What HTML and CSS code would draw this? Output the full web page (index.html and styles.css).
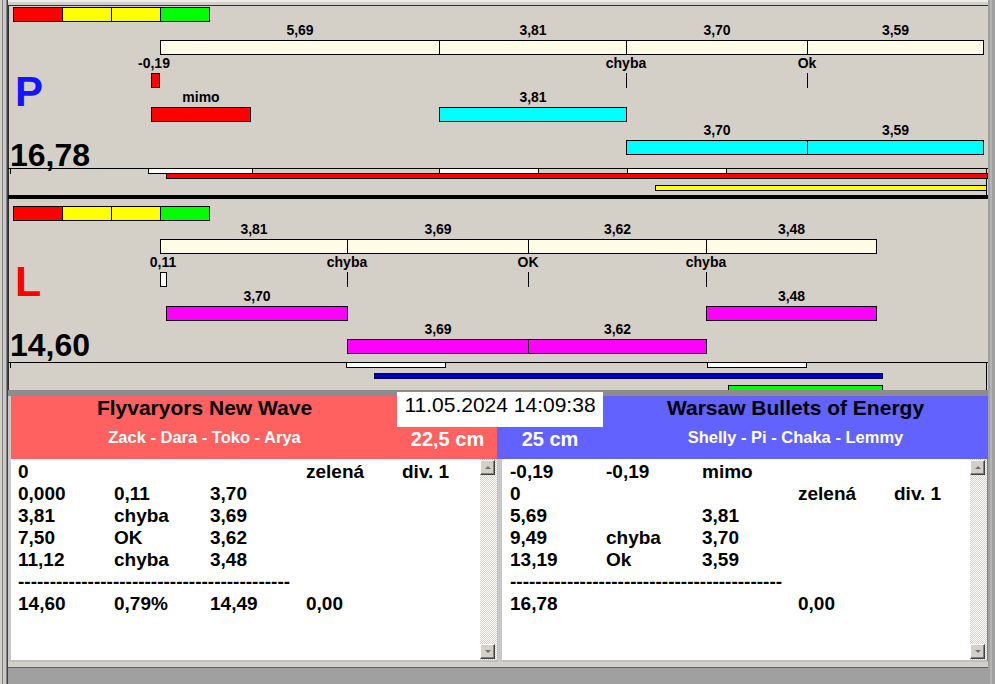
FILE: index.html
```html
<!DOCTYPE html>
<html>
<head>
<meta charset="utf-8">
<link rel="stylesheet" href="styles.css">
</head>
<body>
<div class="app">
  <div class="lstrip"></div>
  <div class="col">
    <div class="topstrip"></div>

    <div class="chart p">
      <div class="legend"><span class="red"></span><span class="yellow"></span><span class="yellow"></span><span class="green"></span></div>

      <div class="seg cream r1" style="left:152px;width:280px"><span class="lbl">5,69</span></div>
      <div class="seg cream r1" style="left:431px;width:188px"><span class="lbl">3,81</span></div>
      <div class="seg cream r1" style="left:618px;width:182px"><span class="lbl">3,70</span></div>
      <div class="seg cream r1" style="left:799px;width:177px"><span class="lbl">3,59</span></div>

      <span class="sub" style="left:146px">-0,19</span>
      <span class="sub" style="left:618px">chyba</span>
      <span class="sub" style="left:799px">Ok</span>
      <div class="tick" style="left:618px"></div>
      <div class="tick" style="left:799px"></div>
      <div class="mark red" style="left:143px;width:9px"></div>

      <div class="seg red r2" style="left:143px;width:100px"><span class="lbl">mimo</span></div>
      <div class="seg cyan r2" style="left:431px;width:188px"><span class="lbl">3,81</span></div>
      <div class="seg cyan r3" style="left:618px;width:182px"><span class="lbl">3,70</span></div>
      <div class="seg cyan r3" style="left:799px;width:177px"><span class="lbl">3,59</span></div>

      <div class="letter">P</div>
      <div class="total">16,78</div>

      <div class="base"></div>
      <div class="tk0"></div>
      <div class="vend"></div>
      <div class="ln red" style="left:158px;width:822px"></div>
      <div class="wseg" style="left:140px;width:105px"></div>
      <div class="wseg" style="left:431px;width:100px"></div>
      <div class="wseg" style="left:619px;width:100px"></div>
      <div class="ln yellow" style="left:647px;width:332px"></div>
    </div>

    <div class="sep"></div>

    <div class="chart l">
      <div class="legend"><span class="red"></span><span class="yellow"></span><span class="yellow"></span><span class="green"></span></div>

      <div class="seg cream r1" style="left:152px;width:188px"><span class="lbl">3,81</span></div>
      <div class="seg cream r1" style="left:339px;width:182px"><span class="lbl">3,69</span></div>
      <div class="seg cream r1" style="left:520px;width:179px"><span class="lbl">3,62</span></div>
      <div class="seg cream r1" style="left:698px;width:171px"><span class="lbl">3,48</span></div>

      <span class="sub" style="left:155px">0,11</span>
      <span class="sub" style="left:339px">chyba</span>
      <span class="sub" style="left:520px">OK</span>
      <span class="sub" style="left:698px">chyba</span>
      <div class="tick" style="left:339px"></div>
      <div class="tick" style="left:520px"></div>
      <div class="tick" style="left:698px"></div>
      <div class="mark white" style="left:152px;width:7px"></div>

      <div class="seg mag r2" style="left:158px;width:182px"><span class="lbl">3,70</span></div>
      <div class="seg mag r2" style="left:698px;width:171px"><span class="lbl">3,48</span></div>
      <div class="seg mag r3" style="left:339px;width:182px"><span class="lbl">3,69</span></div>
      <div class="seg mag r3" style="left:520px;width:179px"><span class="lbl">3,62</span></div>

      <div class="letter">L</div>
      <div class="total">14,60</div>

      <div class="base"></div>
      <div class="tk0"></div>
      <div class="vend"></div>
      <div class="wseg" style="left:338px;width:100px"></div>
      <div class="wseg" style="left:699px;width:100px"></div>
      <div class="ln blue" style="left:366px;width:509px"></div>
      <div class="ln green" style="left:720px;width:155px"></div>
    </div>

    <div class="band"></div>

    <div class="bottom">
      <div class="team team-a">
        <div class="names">
          <div class="title">Flyvaryors New Wave</div>
          <div class="members">Zack - Dara - Toko - Arya</div>
        </div>
        <div class="cm">22,5 cm</div>
      </div>
      <div class="team team-b">
        <div class="cm">25 cm</div>
        <div class="names">
          <div class="title">Warsaw Bullets of Energy</div>
          <div class="members">Shelly - Pi - Chaka - Lemmy</div>
        </div>
      </div>

      <div class="list list-a">
        <div class="body">
          <div class="rows">
            <span>0</span><span></span><span></span><span>zelená</span><span>div. 1</span>
            <span>0,000</span><span>0,11</span><span>3,70</span><span></span><span></span>
            <span>3,81</span><span>chyba</span><span>3,69</span><span></span><span></span>
            <span>7,50</span><span>OK</span><span>3,62</span><span></span><span></span>
            <span>11,12</span><span>chyba</span><span>3,48</span><span></span><span></span>
            <span class="dash">-------------------------------------------</span>
            <span>14,60</span><span>0,79%</span><span>14,49</span><span>0,00</span><span></span>
          </div>
        </div>
        <div class="sb">
          <div class="sbtn up"><i></i></div>
          <div class="track"></div>
          <div class="sbtn down"><i></i></div>
        </div>
      </div>

      <div class="list list-b">
        <div class="body">
          <div class="rows">
            <span>-0,19</span><span>-0,19</span><span>mimo</span><span></span><span></span>
            <span>0</span><span></span><span></span><span>zelená</span><span>div. 1</span>
            <span>5,69</span><span></span><span>3,81</span><span></span><span></span>
            <span>9,49</span><span>chyba</span><span>3,70</span><span></span><span></span>
            <span>13,19</span><span>Ok</span><span>3,59</span><span></span><span></span>
            <span class="dash">-------------------------------------------</span>
            <span>16,78</span><span></span><span></span><span>0,00</span><span></span>
          </div>
        </div>
        <div class="sb">
          <div class="sbtn up"><i></i></div>
          <div class="track"></div>
          <div class="sbtn down"><i></i></div>
        </div>
      </div>

      <div class="date">11.05.2024 14:09:38</div>
    </div>

    <div class="bstrip"></div>
  </div>
  <div class="rstrip"></div>
</div>
</body>
</html>
```

FILE: styles.css
```css
* { box-sizing: border-box; margin: 0; padding: 0; }
body { margin: 0; background: #a0a0a0; font-family: "Liberation Sans", Arial, sans-serif; color: #000; }

.app { display: flex; width: 995px; height: 684px; overflow: hidden; background: #a0a0a0; }
.lstrip { width: 8px; flex: none; background: linear-gradient(to right, #d4d0c8 0 2px, #808080 2px 3px, #c8c8c8 3px 6px, #808080 6px 7px, #404040 7px 8px); }
.col { width: 980px; flex: none; display: flex; flex-direction: column; }
.rstrip { flex: 1; background: linear-gradient(to right, #a0a0a0 0 2px, #b4b4b4 2px 4px, #a0a0a0 4px); }

.topstrip { height: 5px; flex: none; background: #d4d0c8; border-top: 2px solid #ececec; }

.chart { position: relative; flex: none; background: #d4d0c8; overflow: hidden; }
.chart.p { height: 190px; box-shadow: inset 1px 1px 0 #303030; }
.chart.l { height: 191px; box-shadow: inset 1px 0 0 #303030; }
.sep { height: 4px; flex: none; background: #000; }
.band { height: 6px; flex: none; background: #8c8c8c; }

.legend { position: absolute; left: 5px; display: flex; height: 15px; }
.legend span { width: 50px; height: 15px; border: 1px solid #000; margin-left: -1px; }
.legend span:first-child { margin-left: 0; }
.p .legend { top: 2px; }
.l .legend { top: 7px; }

.red { background: #ff0000; }
.yellow { background: #ffff00; }
.green { background: #00ff00; }
.cream { background: #fffce6; }
.cyan { background: #00ffff; }
.mag { background: #ff00ff; }
.white { background: #ffffff; }
.blue { background: #0000b4; }

.seg { position: absolute; height: 15px; border: 1px solid #000; }
.lbl, .sub { font-size: 14px; line-height: 14px; font-weight: bold; white-space: nowrap; color: #000; text-align: center; }
.lbl { position: absolute; left: -20px; right: -20px; bottom: calc(100% + 4px); }
.sub { position: absolute; width: 60px; margin-left: -30px; }

.p .r1 { top: 35px; }
.p .r2 { top: 102px; }
.p .r3 { top: 135px; }
.l .r1 { top: 40px; }
.l .r2 { top: 107px; }
.l .r3 { top: 140px; }
.p .sub { top: 51px; }
.l .sub { top: 56px; }

.tick { position: absolute; width: 1px; height: 15px; background: #000; }
.mark { position: absolute; height: 15px; border: 1px solid #000; }
.p .tick, .p .mark { top: 68px; }
.l .tick, .l .mark { top: 73px; }

.letter { position: absolute; left: 7px; font-weight: bold; }
.p .letter { top: 66px; font-size: 42px; line-height: 42px; color: #1414ff; }
.l .letter { top: 61px; font-size: 43px; line-height: 43px; color: #ff0000; }
.total { position: absolute; left: 2px; font-size: 32px; line-height: 32px; font-weight: bold; color: #000; }
.p .total { top: 134px; }
.l .total { top: 130px; }

.base { position: absolute; left: 0; top: 163px; width: 980px; height: 1px; background: #000; }
.tk0 { position: absolute; left: 2px; top: 163px; width: 1px; height: 6px; background: #000; }
.vend { position: absolute; left: 978px; top: 163px; width: 1px; height: 28px; background: #000; }
.wseg { position: absolute; top: 163px; height: 6px; border: 1px solid #000; background: #fff; }
.ln { position: absolute; height: 6px; border: 1px solid #000; }
.p .ln.red { top: 168px; }
.p .ln.yellow { top: 180px; }
.l .ln.blue { top: 174px; border-color: #000060; }
.l .ln.green { top: 186px; height: 6px; }

.bottom { position: relative; flex: none; height: 266px; display: grid; grid-template-columns: 486px 491px; grid-template-rows: 63px 203px; padding-left: 3px; background: #c8c8c8; }
.team { display: flex; }
.team-a { background: #ff6060; }
.team-b { background: #6262ff; }
.team-a .names { width: 387px; flex: none; }
.team-b .names { flex: 1; }
.team-b .cm { width: 106px; flex: none; }
.team-a .cm { flex: 1; }
.names { text-align: center; }
.title { font-size: 21px; line-height: 24px; font-weight: bold; color: #000; white-space: nowrap; }
.members { margin-top: 8px; font-size: 16.5px; line-height: 18px; font-weight: bold; color: #fff; white-space: nowrap; }
.cm { padding-top: 32px; text-align: center; font-size: 20px; line-height: 22px; font-weight: bold; color: #fff; white-space: nowrap; }

.date { position: absolute; left: 389px; top: -4px; width: 206px; height: 35px; background: #fff; text-align: center; font-size: 21px; line-height: 20px; padding-top: 3px; white-space: nowrap; }

.list { display: flex; background: #fff; border-bottom: 2px solid #c0c0c0; width: 486px; }
.list-b { margin-left: 5px; border-right: 1px solid #808080; }
.list .body { flex: 1; padding-top: 2px; overflow: hidden; }
.list-a .body { padding-left: 7px; }
.list-b .body { padding-left: 8px; }
.rows { display: grid; grid-template-columns: repeat(5, 96px); grid-auto-rows: 22px; font-size: 19px; line-height: 22px; font-weight: bold; white-space: nowrap; }
.dash { grid-column: 1 / -1; }

.sb { width: 17px; flex: none; display: flex; flex-direction: column; background: repeating-conic-gradient(#ffffff 0 25%, #d4d0c8 0 50%) 0 0 / 2px 2px; padding: 1px 2px 1px 0; }
.sbtn { width: 15px; height: 15px; flex: none; background: #d4d0c8; border: 1px solid; border-color: #ffffff #404040 #404040 #ffffff; box-shadow: inset -1px -1px 0 #808080; display: flex; align-items: center; justify-content: center; }
.sbtn i { width: 0; height: 0; border-left: 3px solid transparent; border-right: 3px solid transparent; }
.up i { border-bottom: 3px solid #707070; }
.down i { border-top: 3px solid #707070; }
.track { flex: 1; }

.bstrip { flex: 1; background: #a0a0a0; border-top: 5px solid #d4d0c8; box-shadow: inset 0 1px 0 #606060; }
```
